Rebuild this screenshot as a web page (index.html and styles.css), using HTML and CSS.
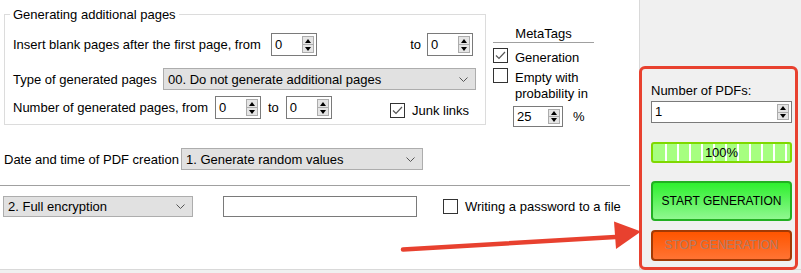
FILE: index.html
```html
<!DOCTYPE html>
<html lang="en">
<head>
    <meta charset="UTF-8">
    <title>PDF Generator</title>
    <link rel="stylesheet" href="styles.css">
</head>
<body>

<div class="window">
    <div class="main">
        <div class="top">
            <div class="group">
                <span class="group-title">Generating additional pages</span>

                <div class="row row-insert">
                    <span class="lbl lbl-insert">Insert blank pages after the first page, from</span>
                    <div class="spin"><span>0</span><span class="spin-btns"><i class="up"></i><i class="down"></i></span></div>
                    <span class="to to-right">to</span>
                    <div class="spin"><span>0</span><span class="spin-btns"><i class="up"></i><i class="down"></i></span></div>
                </div>

                <div class="row row-type">
                    <span class="lbl lbl-type">Type of generated pages</span>
                    <div class="combo combo-type">
                        <span>00. Do not generate additional pages</span>
                        <svg class="chevron" width="9" height="5" viewBox="0 0 9 5"><polyline points="0.5,0.5 4.5,4.5 8.5,0.5" fill="none" stroke="#555" stroke-width="1"/></svg>
                    </div>
                </div>

                <div class="row row-count">
                    <span class="lbl lbl-count">Number of generated pages, from</span>
                    <div class="spin"><span>0</span><span class="spin-btns"><i class="up"></i><i class="down"></i></span></div>
                    <span class="to">to</span>
                    <div class="spin"><span>0</span><span class="spin-btns"><i class="up"></i><i class="down"></i></span></div>
                    <label class="check check-junk">
                        <span class="box"><svg width="13" height="13" viewBox="0 0 13 13"><polyline points="2,6.5 5,9.5 11,3" fill="none" stroke="#555" stroke-width="1.2"/></svg></span>
                        Junk links
                    </label>
                </div>
            </div>

            <div class="meta">
                <div class="meta-title">MetaTags</div>
                <label class="check meta-check">
                    <span class="box"><svg width="13" height="13" viewBox="0 0 13 13"><polyline points="2,6.5 5,9.5 11,3" fill="none" stroke="#555" stroke-width="1.2"/></svg></span>
                    <span class="meta-text">Generation</span>
                </label>
                <label class="check meta-check meta-check-empty">
                    <span class="box"></span>
                    <span class="meta-text">Empty with<br>probability in</span>
                </label>
                <div class="meta-prob">
                    <div class="spin spin-prob"><span>25</span><span class="spin-btns"><i class="up"></i><i class="down"></i></span></div>
                    <span class="pct">%</span>
                </div>
            </div>
        </div>

        <div class="row row-date">
            <span class="lbl lbl-date">Date and time of PDF creation</span>
            <div class="combo combo-date">
                <span>1. Generate random values</span>
                <svg class="chevron" width="9" height="5" viewBox="0 0 9 5"><polyline points="0.5,0.5 4.5,4.5 8.5,0.5" fill="none" stroke="#555" stroke-width="1"/></svg>
            </div>
        </div>

        <div class="divider"></div>

        <div class="row row-crypt">
            <div class="combo combo-crypt">
                <span>2. Full encryption</span>
                <svg class="chevron" width="9" height="5" viewBox="0 0 9 5"><polyline points="0.5,0.5 4.5,4.5 8.5,0.5" fill="none" stroke="#555" stroke-width="1"/></svg>
            </div>
            <div class="text-input"></div>
            <label class="check check-pass">
                <span class="box"></span>
                Writing a password to a file
            </label>
        </div>
    </div>

    <div class="side">
        <div class="target">
            <div class="side-label">Number of PDFs:</div>
            <div class="spin spin-pdfs"><span>1</span><span class="spin-btns"><i class="up"></i><i class="down"></i></span></div>
            <div class="progress">100%</div>
            <div class="btn-start">START GENERATION</div>
            <div class="btn-stop">STOP GENERATION</div>
        </div>
    </div>

    <!-- annotation arrow -->
    <svg class="arrow" width="801" height="273" viewBox="0 0 801 273">
        <line x1="403" y1="249.5" x2="624" y2="236.5" stroke="#e8412f" stroke-width="4.5" stroke-linecap="round"/>
        <polygon points="614,221.5 641,231.5 616,249" fill="#e8412f"/>
    </svg>
</div>

</body>
</html>
```

FILE: styles.css
```css
* {
    box-sizing: border-box;
}

body {
    margin: 0;
    font-family: "Liberation Sans", Arial, sans-serif;
    font-size: 13px;
    line-height: 15px;
    color: #000;
    background-color: #f0f0f0;
}

.window {
    display: flex;
    height: 270px;
    border-bottom: 1px solid #d9d9d9;
    position: relative;
}

.main {
    width: 639px;
    background-color: #fff;
}

.top {
    display: flex;
    align-items: flex-start;
    height: 125px;
    padding-top: 14px;
}

/* group box */
.group {
    position: relative;
    margin-left: 4px;
    width: 482px;
    border: 1px solid #dcdcdc;
    padding: 18px 12px 5px 8px;
}

.group-title {
    position: absolute;
    top: -8px;
    left: 5px;
    padding: 0 3px;
    background-color: #fff;
}

.row {
    display: flex;
    align-items: center;
}

.row-insert {
    height: 23px;
}

.row-type {
    height: 22px;
    margin-top: 12px;
}

.row-count {
    height: 23px;
    margin-top: 6px;
}

.lbl {
    white-space: nowrap;
}

.lbl-insert {
    width: 258px;
}

.lbl-type {
    width: 150px;
}

.lbl-count {
    width: 202px;
}

.to {
    margin: 0 7px 0 7px;
}

.to-right {
    margin-left: auto;
    margin-right: 6px;
}

/* spin edit */
.spin {
    position: relative;
    width: 46px;
    height: 23px;
    border: 1px solid #7a7a7a;
    background-color: #fff;
    padding-left: 3px;
    line-height: 21px;
}

.spin-btns {
    position: absolute;
    right: 2px;
    top: 2px;
    bottom: 2px;
    width: 12px;
    display: flex;
    flex-direction: column;
}

.spin-btns i {
    flex: 1;
    display: flex;
    align-items: center;
    justify-content: center;
    border: 1px solid #acacac;
    background-color: #e5e5e5;
}

.spin-btns i + i {
    border-top: none;
}

.spin-btns .up::before {
    content: "";
    border-left: 3px solid transparent;
    border-right: 3px solid transparent;
    border-bottom: 4px solid #000;
}

.spin-btns .down::before {
    content: "";
    border-left: 3px solid transparent;
    border-right: 3px solid transparent;
    border-top: 4px solid #000;
}

/* combo box */
.combo {
    height: 22px;
    display: flex;
    align-items: center;
    justify-content: space-between;
    border: 1px solid #adadad;
    background-color: #e1e1e1;
    padding: 0 7px 0 4px;
    white-space: nowrap;
}

.combo-type {
    width: 313px;
    margin-right: -3px;
}

/* checkbox */
.check {
    display: flex;
    align-items: center;
    white-space: nowrap;
}

.box {
    width: 15px;
    height: 15px;
    border: 1px solid #333;
    background-color: #fff;
    margin-right: 7px;
    display: flex;
    align-items: center;
    justify-content: center;
    flex-shrink: 0;
}

.check-junk {
    margin-left: auto;
    margin-right: 4px;
    margin-top: 5px;
}

/* metatags */
.meta {
    margin-left: 7px;
    width: 101px;
    padding-top: 12px;
}

.meta-title {
    text-align: center;
    border-bottom: 1px solid #a0a0a0;
    padding-bottom: 1px;
}

.meta-check {
    align-items: flex-start;
    margin-top: 5px;
}

.meta-check-empty {
    margin-top: 2px;
}

.meta-text {
    margin-top: 2px;
    line-height: 16px;
}

.meta-prob {
    display: flex;
    align-items: center;
    margin-top: 4px;
    padding-left: 20px;
}

.spin-prob {
    width: 50px;
    height: 21px;
    line-height: 19px;
}

.pct {
    margin-left: 10px;
}

/* date row */
.row-date {
    height: 22px;
    margin: 23px 0 0 4px;
}

.lbl-date {
    width: 177px;
}

.combo-date {
    width: 242px;
}

.divider {
    width: 630px;
    height: 1px;
    margin-top: 15px;
    background-color: #a0a0a0;
}

/* encryption row */
.row-crypt {
    height: 21px;
    margin: 10px 0 0 3px;
}

.combo-crypt {
    width: 190px;
    height: 21px;
}

.text-input {
    width: 194px;
    height: 21px;
    margin-left: 30px;
    border: 1px solid #7a7a7a;
    background-color: #fff;
}

.check-pass {
    margin-left: 26px;
}

/* right panel */
.side {
    width: 162px;
    border-left: 1px solid #d9d9d9;
    background-color: #f0f0f0;
}

.target {
    height: 204px;
    margin: 66px 3px 0 -1px;
    padding: 14px 3px 0 9px;
    border: 3px solid #e8412f;
    border-radius: 6px;
}

.spin-pdfs {
    width: 141px;
    height: 22px;
    margin-top: 3px;
    line-height: 20px;
}

.progress {
    width: 141px;
    height: 21px;
    margin-top: 19px;
    border: 2px solid #7fd800;
    border-radius: 3px;
    background: repeating-linear-gradient(90deg, #a6ff80 0, #a6ff80 10px, #fff 10px, #fff 12px);
    background-position: 2px 0;
    text-align: center;
    line-height: 17px;
}

.btn-start {
    width: 141px;
    height: 40px;
    margin-top: 18px;
    border: 2px solid #22b022;
    border-radius: 4px;
    background: linear-gradient(#2ef02e, #90f890);
    text-align: center;
    line-height: 36px;
    font-size: 12px;
}

.btn-stop {
    width: 141px;
    height: 31px;
    margin-top: 9px;
    border: 2px solid #a33a05;
    border-radius: 4px;
    background: linear-gradient(#ff5500, #ff7333);
    color: #b07b66;
    text-align: center;
    line-height: 27px;
    font-size: 12px;
}

.arrow {
    position: absolute;
    left: 0;
    top: 0;
    pointer-events: none;
}
```
